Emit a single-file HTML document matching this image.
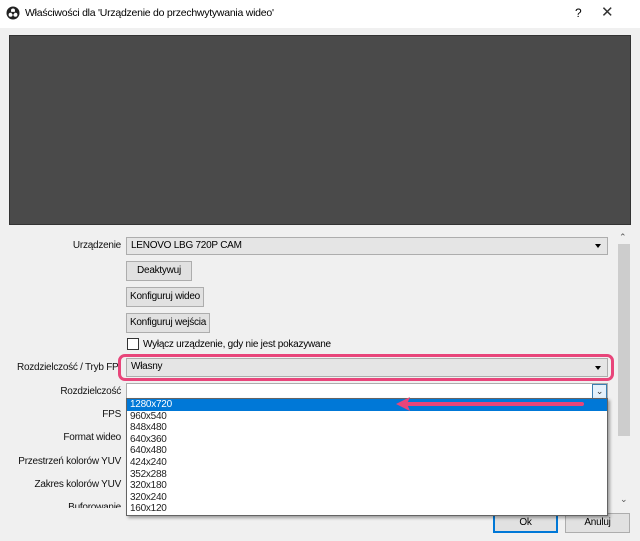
<!DOCTYPE html>
<html><head><meta charset="utf-8"><style>
*{box-sizing:border-box;margin:0;padding:0}
body{width:640px;height:541px;background:#f0f0f0;font-family:"Liberation Sans",sans-serif;font-size:10px;letter-spacing:-0.25px;color:#000;position:relative;overflow:hidden}
.a{position:absolute;white-space:nowrap}
.title{left:0;top:0;width:640px;height:28px;background:#fff}
.lbl{position:absolute;right:519px;white-space:nowrap;text-align:right;color:#111}
.combo{position:absolute;background:#e5e5e5;border:1px solid #adadad;padding-left:4px;line-height:15px;white-space:nowrap}
.btn{position:absolute;background:#e1e1e1;border:1px solid #adadad;text-align:center;line-height:17px;white-space:nowrap}
.tri{position:absolute;right:6px;top:6px;width:0;height:0;border-left:3.5px solid transparent;border-right:3.5px solid transparent;border-top:4px solid #000}
.it{height:11.6px;line-height:11.6px;padding-left:3px}
</style></head><body>
<div class="a title"></div>
<svg class="a" style="left:6px;top:6px" width="14" height="14" viewBox="0 0 14 14"><circle cx="7" cy="7" r="6.5" fill="#222"/><circle cx="7" cy="4.5" r="2" fill="#fff"/><circle cx="4.6" cy="8.7" r="2" fill="#fff"/><circle cx="9.4" cy="8.7" r="2" fill="#fff"/><circle cx="7" cy="7" r="1.3" fill="#222"/></svg>
<div class="a" style="left:25px;top:7px;font-size:10.5px">Właściwości dla 'Urządzenie do przechwytywania wideo'</div>
<div class="a" style="left:575px;top:6px;font-size:12px">?</div>
<div class="a" style="left:601px;top:3px;font-size:15px;color:#333">✕</div>
<div class="a" style="left:9px;top:35px;width:622px;height:190px;background:#4a4a4a;border:1px solid #333"></div>
<div class="a" style="left:617px;top:232px;width:14px;height:278px;background:#f0f0f0"></div>
<div class="a" style="left:618px;top:244px;width:12px;height:192px;background:#cdcdcd"></div>
<div class="a" style="left:619px;top:232px;font-size:9px;color:#555">⌃</div>
<div class="a" style="left:620px;top:494px;font-size:9px;color:#555">⌄</div>

<div class="lbl" style="top:240px">Urządzenie</div>
<div class="combo" style="left:126px;top:237px;width:482px;height:18px">LENOVO LBG 720P CAM<div class="tri"></div></div>
<div class="btn" style="left:126px;top:261px;width:66px;height:20px">Deaktywuj</div>
<div class="btn" style="left:126px;top:287px;width:78px;height:20px">Konfiguruj wideo</div>
<div class="btn" style="left:126px;top:313px;width:84px;height:20px">Konfiguruj wejścia</div>
<div class="a" style="left:127px;top:338px;width:12px;height:12px;background:#fff;border:1px solid #333"></div>
<div class="a" style="left:143px;top:339px">Wyłącz urządzenie, gdy nie jest pokazywane</div>

<div class="lbl" style="top:362px">Rozdzielczość / Tryb FP:</div>
<div class="combo" style="left:126px;top:358px;width:482px;height:19px;line-height:16px">Własny<div class="tri" style="top:7px"></div></div>
<div class="a" style="left:118px;top:354px;width:496px;height:27px;border:3px solid #e8457a;border-radius:7px"></div>

<div class="lbl" style="top:386px">Rozdzielczość</div>
<div class="a" style="left:126px;top:383px;width:482px;height:18px;background:#fff;border:1px solid #adadad"></div>
<div class="a" style="left:592px;top:384px;width:15px;height:16px;background:#e5f1fb;border:1px solid #3c7fb1;font-size:9px;text-align:center;line-height:12px;color:#333">⌄</div>
<div class="lbl" style="top:409px">FPS</div>
<div class="lbl" style="top:432px">Format wideo</div>
<div class="lbl" style="top:456px">Przestrzeń kolorów YUV</div>
<div class="lbl" style="top:479px">Zakres kolorów YUV</div>
<div class="lbl" style="top:502px;height:6px;overflow:hidden">Buforowanie</div>

<div class="a" style="left:493px;top:513px;width:65px;height:20px;background:#e1e1e1;border:2px solid #0078d7;text-align:center;line-height:16px">Ok</div>
<div class="btn" style="left:565px;top:513px;width:65px;height:20px">Anuluj</div>

<div class="a" style="left:126px;top:398px;width:482px;height:118px;background:#fff;border:1px solid #646464;box-shadow:2px 2px 3px rgba(0,0,0,.35);color:#222">
<div class="it" style="background:#0078d7;color:#fff">1280x720</div>
<div class="it">960x540</div><div class="it">848x480</div><div class="it">640x360</div><div class="it">640x480</div><div class="it">424x240</div><div class="it">352x288</div><div class="it">320x180</div><div class="it">320x240</div><div class="it">160x120</div>
</div>
<svg class="a" style="left:394px;top:396px" width="192" height="16"><line x1="12" y1="8" x2="188" y2="8" stroke="#e8457a" stroke-width="4" stroke-linecap="round"/><polygon points="2,8 16,1 13,8 16,15" fill="#e8457a"/></svg>
</body></html>
